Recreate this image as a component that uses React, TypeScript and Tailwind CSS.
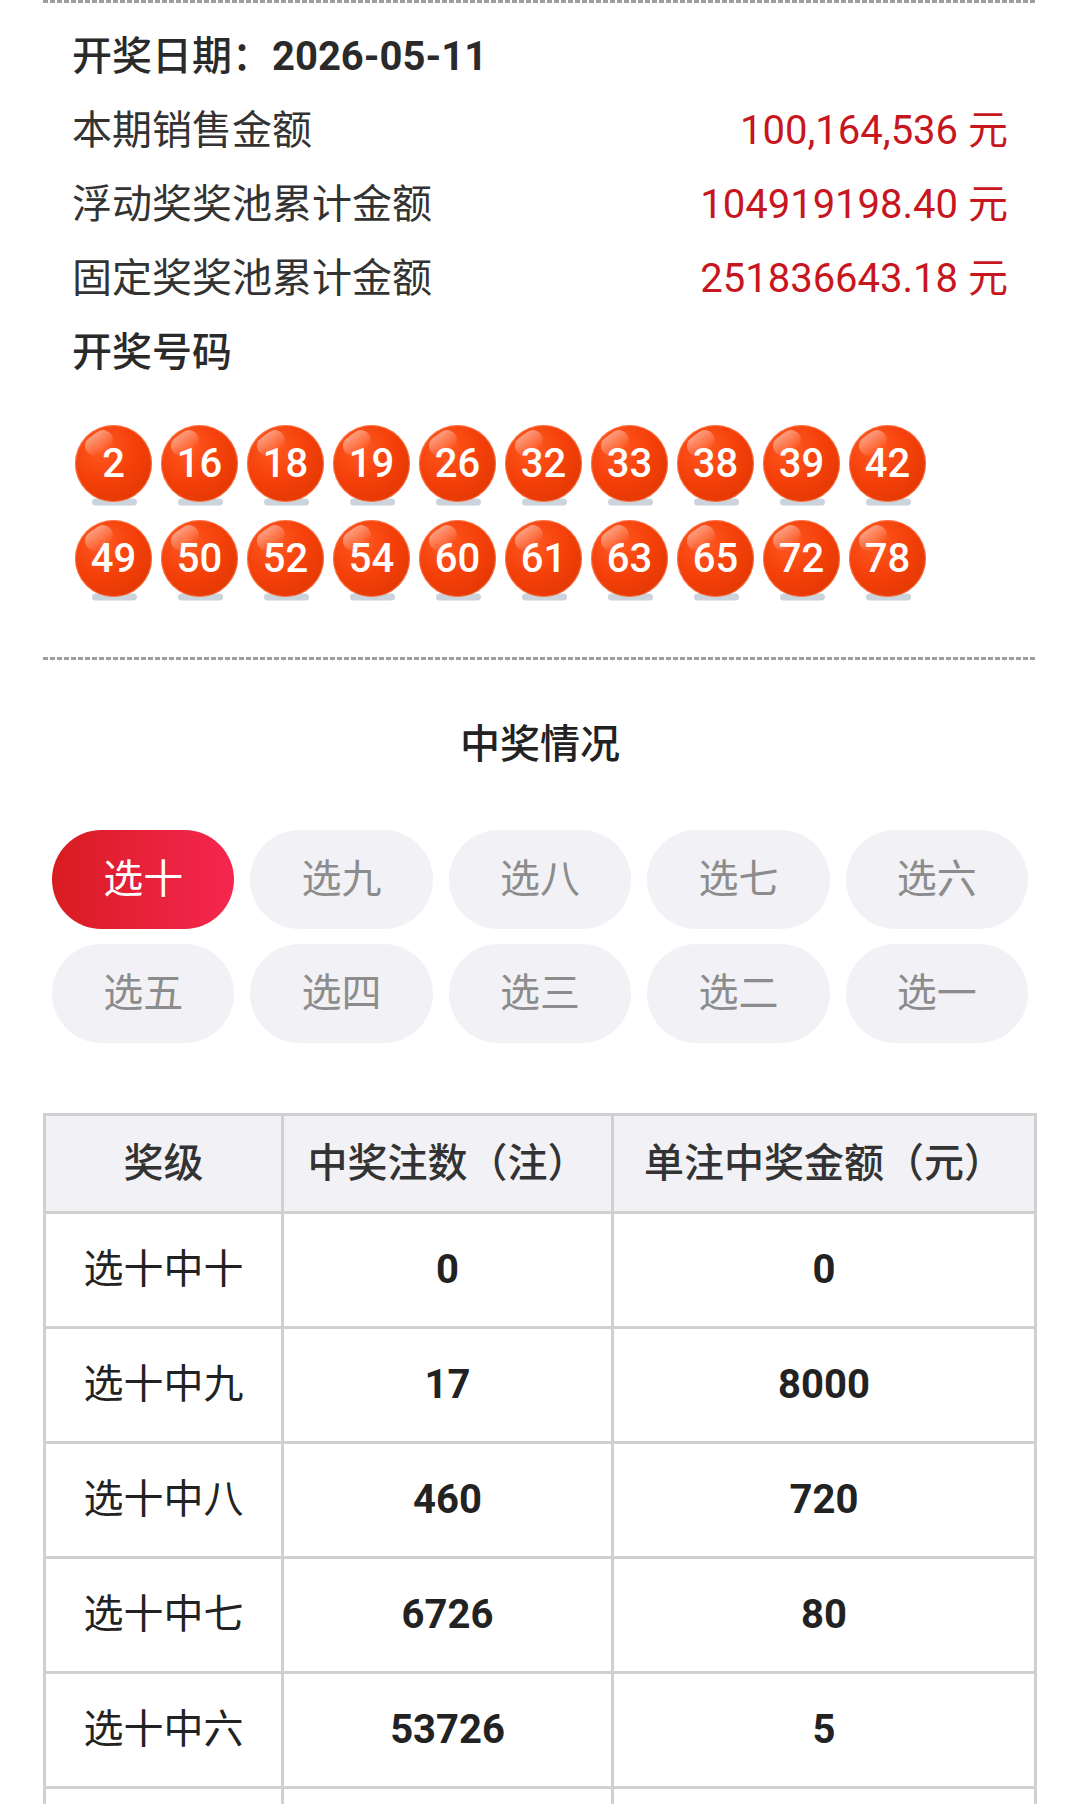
const summary = [
  { label: '本期销售金额', value: '100,164,536 元' },
  { label: '浮动奖奖池累计金额', value: '104919198.40 元' },
  { label: '固定奖奖池累计金额', value: '251836643.18 元' },
];

const numbers = [
  [2, 16, 18, 19, 26, 32, 33, 38, 39, 42],
  [49, 50, 52, 54, 60, 61, 63, 65, 72, 78],
];

const tabs = ['选十', '选九', '选八', '选七', '选六', '选五', '选四', '选三', '选二', '选一'];

// the last row only peeks in at the bottom edge, so it carries no text
const prizes = [
  { level: '选十中十', count: '0', amount: '0' },
  { level: '选十中九', count: '17', amount: '8000' },
  { level: '选十中八', count: '460', amount: '720' },
  { level: '选十中七', count: '6726', amount: '80' },
  { level: '选十中六', count: '53726', amount: '5' },
  { level: '', count: '', amount: '' },
];

function Dashed() {
  return (
    <div className="h-[3px] w-full bg-[repeating-linear-gradient(to_right,#9e9e9e_0_5px,transparent_5px_7px)]" />
  );
}

function Ball({ n }: { n: number }) {
  return (
    <div className="relative h-[77px] w-[77px] shrink-0">
      <div className="absolute left-[17px] top-[77px] h-[7px] w-[45px] -translate-y-1/2 rounded-full bg-[#cbd3dc]" />
      <div className="relative flex h-[77px] w-[77px] items-center justify-center overflow-hidden rounded-full bg-[radial-gradient(circle_at_35%_30%,#ff5a22_0%,#f5400a_45%,#d93400_100%)] shadow-[inset_0_0_0_1px_rgba(255,150,110,0.6)]">
        <span className="absolute left-[9px] top-[8px] h-[20px] w-[30px] -rotate-[35deg] rounded-full bg-gradient-to-b from-white/45 to-white/0" />
        <span className="relative text-[40px] font-medium leading-none text-white">{n}</span>
      </div>
    </div>
  );
}

export default function App() {
  return (
    <div className="w-[1080px] bg-white pb-[40px] font-['Roboto','Noto_Sans_CJK_SC',sans-serif] text-[#333]">
      <div className="mx-[43px]">
        <Dashed />
        <div className="px-[29px] pt-[17px]">
          <div className="flex h-[74px] items-center text-[40px]">
            <span className="font-medium text-[#2a2a2a]">开奖日期：</span>
            <span className="font-bold text-[#2a2a2a]">2026-05-11</span>
          </div>
          {summary.map((row) => (
            <div key={row.label} className="flex h-[74px] items-center justify-between text-[40px]">
              <span className="text-[#333]">{row.label}</span>
              <span className="text-[#c8161e]">{row.value}</span>
            </div>
          ))}
          <div className="flex h-[74px] items-center text-[40px] font-medium text-[#2a2a2a]">开奖号码</div>

          <div className="mt-[35px] flex flex-col gap-[18px] pl-[3px]">
            {numbers.map((row, i) => (
              <div key={i} className="flex gap-[9px]">
                {row.map((n) => (
                  <Ball key={n} n={n} />
                ))}
              </div>
            ))}
          </div>
        </div>
        <div className="mt-[60px]">
          <Dashed />
        </div>
      </div>

      <h2 className="mt-[55px] h-[60px] text-center text-[40px] font-medium leading-[60px] text-[#222]">中奖情况</h2>

      <div className="mx-[52px] mt-[55px] grid grid-cols-5 gap-x-[16px] gap-y-[15px]">
        {tabs.map((t, i) => (
          <div
            key={t}
            className={
              i === 0
                ? 'flex h-[99px] items-center justify-center rounded-full bg-gradient-to-r from-[#d81c1f] to-[#f6264f] text-[40px] text-white'
                : 'flex h-[99px] items-center justify-center rounded-full bg-[#f2f2f6] text-[40px] text-[#8c8c8c]'
            }
          >
            {t}
          </div>
        ))}
      </div>

      <div className="mx-[43px] mt-[70px]">
        <table className="w-full border-collapse border-[3px] border-[#d0d0d0] text-[40px]">
          <colgroup>
            <col className="w-[238px]" />
            <col className="w-[330px]" />
            <col />
          </colgroup>
          <thead>
            <tr className="bg-[#f2f2f6]">
              <th className="h-[98px] border-[3px] border-[#d0d0d0] font-medium text-[#333]">奖级</th>
              <th className="h-[98px] border-[3px] border-[#d0d0d0] font-medium text-[#333]">中奖注数（注）</th>
              <th className="h-[98px] border-[3px] border-[#d0d0d0] font-medium text-[#333]">单注中奖金额（元）</th>
            </tr>
          </thead>
          <tbody>
            {prizes.map((p, i) => (
              <tr key={i}>
                <td className="h-[115px] border-[3px] border-[#d0d0d0] text-center text-[#222]">{p.level}</td>
                <td className="h-[115px] border-[3px] border-[#d0d0d0] text-center font-bold text-[#222]">{p.count}</td>
                <td className="h-[115px] border-[3px] border-[#d0d0d0] text-center font-bold text-[#222]">{p.amount}</td>
              </tr>
            ))}
          </tbody>
        </table>
      </div>
    </div>
  );
}
